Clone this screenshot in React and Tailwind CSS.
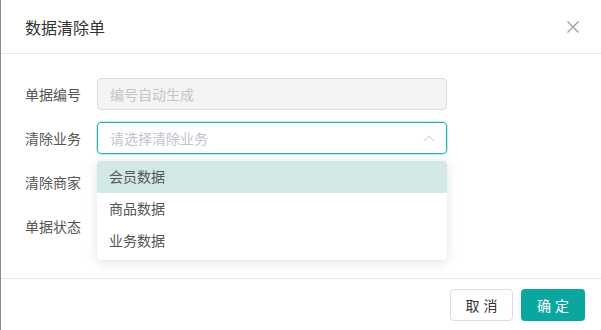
const font = { fontFamily: '"Noto Sans CJK SC", "Noto Sans", sans-serif' };

const Row = ({ label, children }) => (
  <div className="flex h-8 items-center">
    <div className="w-[72px] text-[14px] text-[#555]">{label}</div>
    <div className="relative w-[350px]">{children}</div>
  </div>
);

export default function App() {
  return (
    <div className="h-[330px] w-[601px] border-l border-[#8a8a8a] bg-white" style={font}>
      {/* Header */}
      <div className="flex h-[54px] items-center justify-between border-b border-[#e8e8e8] pl-6 pr-[21px]">
        <span className="text-[16px] text-[#333]">数据清除单</span>
        <svg width="14" height="14" viewBox="0 0 14 14" className="mt-px">
          <path d="M1.5 1.5 L12.5 12.5 M12.5 1.5 L1.5 12.5" stroke="#9a9a9a" strokeWidth="1.2" fill="none" />
        </svg>
      </div>

      {/* Body */}
      <div className="flex h-[225px] flex-col gap-3 border-b border-[#e8e8e8] pl-6 pt-6">
        <Row label="单据编号">
          <div className="flex h-8 items-center rounded border border-[#dcdcdc] bg-[#f4f4f4] px-3 text-[14px] text-[#c0c4cc]">
            编号自动生成
          </div>
        </Row>
        <Row label="清除业务">
          <div className="flex h-8 items-center justify-between rounded border border-[#1fb5ad] px-3 text-[14px] text-[#c0c4cc] shadow-[0_0_0_1px_rgba(31,181,173,0.25)]">
            <span>请选择清除业务</span>
            <svg width="12" height="8" viewBox="0 0 12 8" className="mr-[-1px]">
              <path d="M1 7 L6 2 L11 7" stroke="#d6d8dc" strokeWidth="1.1" fill="none" />
            </svg>
          </div>
          <div className="absolute left-0 top-[39px] z-10 w-[350px] overflow-hidden rounded bg-white pb-[3px] shadow-[0_2px_12px_rgba(0,0,0,0.12)]">
            {["会员数据", "商品数据", "业务数据"].map((t, i) => (
              <div
                key={t}
                className={`flex h-8 items-center px-3 pb-[2px] text-[14px] text-[#555] ${i === 0 ? "bg-[#d2e8e4]" : ""}`}
              >
                {t}
              </div>
            ))}
          </div>
        </Row>
        <Row label="清除商家">
          <div className="h-8 rounded border border-[#dcdcdc]" />
        </Row>
        <Row label="单据状态">
          <div className="h-8 rounded border border-[#dcdcdc]" />
        </Row>
      </div>

      {/* Footer */}
      <div className="flex items-center justify-end gap-2 pr-4 pt-[10px]">
        <button className="h-8 w-[63px] rounded border border-[#dcdcdc] bg-white pl-1 text-[14px] tracking-[4px] text-[#333]">
          取消
        </button>
        <button className="h-8 w-[64px] rounded bg-[#0aa7a1] pl-1 text-[14px] tracking-[4px] text-white">
          确定
        </button>
      </div>
    </div>
  );
}
